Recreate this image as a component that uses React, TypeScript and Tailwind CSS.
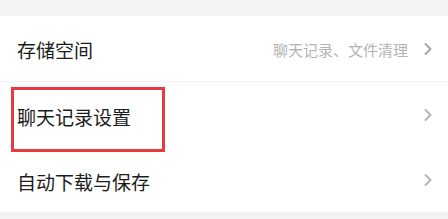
import React from "react";

const Chevron = ({ color }: { color: string }) => (
  <svg width="10" height="14" viewBox="0 0 10 14" fill="none">
    <path d="M2.5 2 L7.5 7 L2.5 12" stroke={color} strokeWidth="2" strokeLinecap="round" strokeLinejoin="round" />
  </svg>
);

export default function App() {
  return (
    <div className="w-[448px] h-[219px] bg-[#f3f3f3] flex flex-col overflow-hidden" style={{ fontFamily: '"Noto Sans CJK SC", "Noto Sans", sans-serif' }}>
      <div className="h-[16px] shrink-0" />
      <div className="bg-white flex flex-col relative">
        <div className="h-[66px] flex items-center justify-between pl-[17px] pr-[15px] border-b border-[#f3f3f3]">
          <span className="text-[19px] text-[#1c1c1c] leading-none pt-[2px]">存储空间</span>
          <div className="flex items-center gap-[15px]">
            <span className="text-[15px] text-[#b3b3b3] leading-none pt-[2px]">聊天记录、文件清理</span>
            <Chevron color="#a8a8a8" />
          </div>
        </div>
        <div className="h-[65px] flex items-center justify-between pl-[17px] pr-[15px]">
          <span className="text-[19px] text-[#1c1c1c] leading-none pt-[3px]">聊天记录设置</span>
          <Chevron color="#b5b5b5" />
        </div>
        <div className="h-[65px] flex items-center justify-between pl-[17px] pr-[15px]">
          <span className="text-[19px] text-[#1c1c1c] leading-none pt-[3px]">自动下载与保存</span>
          <Chevron color="#b5b5b5" />
        </div>
        <div className="absolute left-[11px] top-[71px] w-[154px] h-[65px] border-[3px] border-[#e53a3f]" />
      </div>
    </div>
  );
}
